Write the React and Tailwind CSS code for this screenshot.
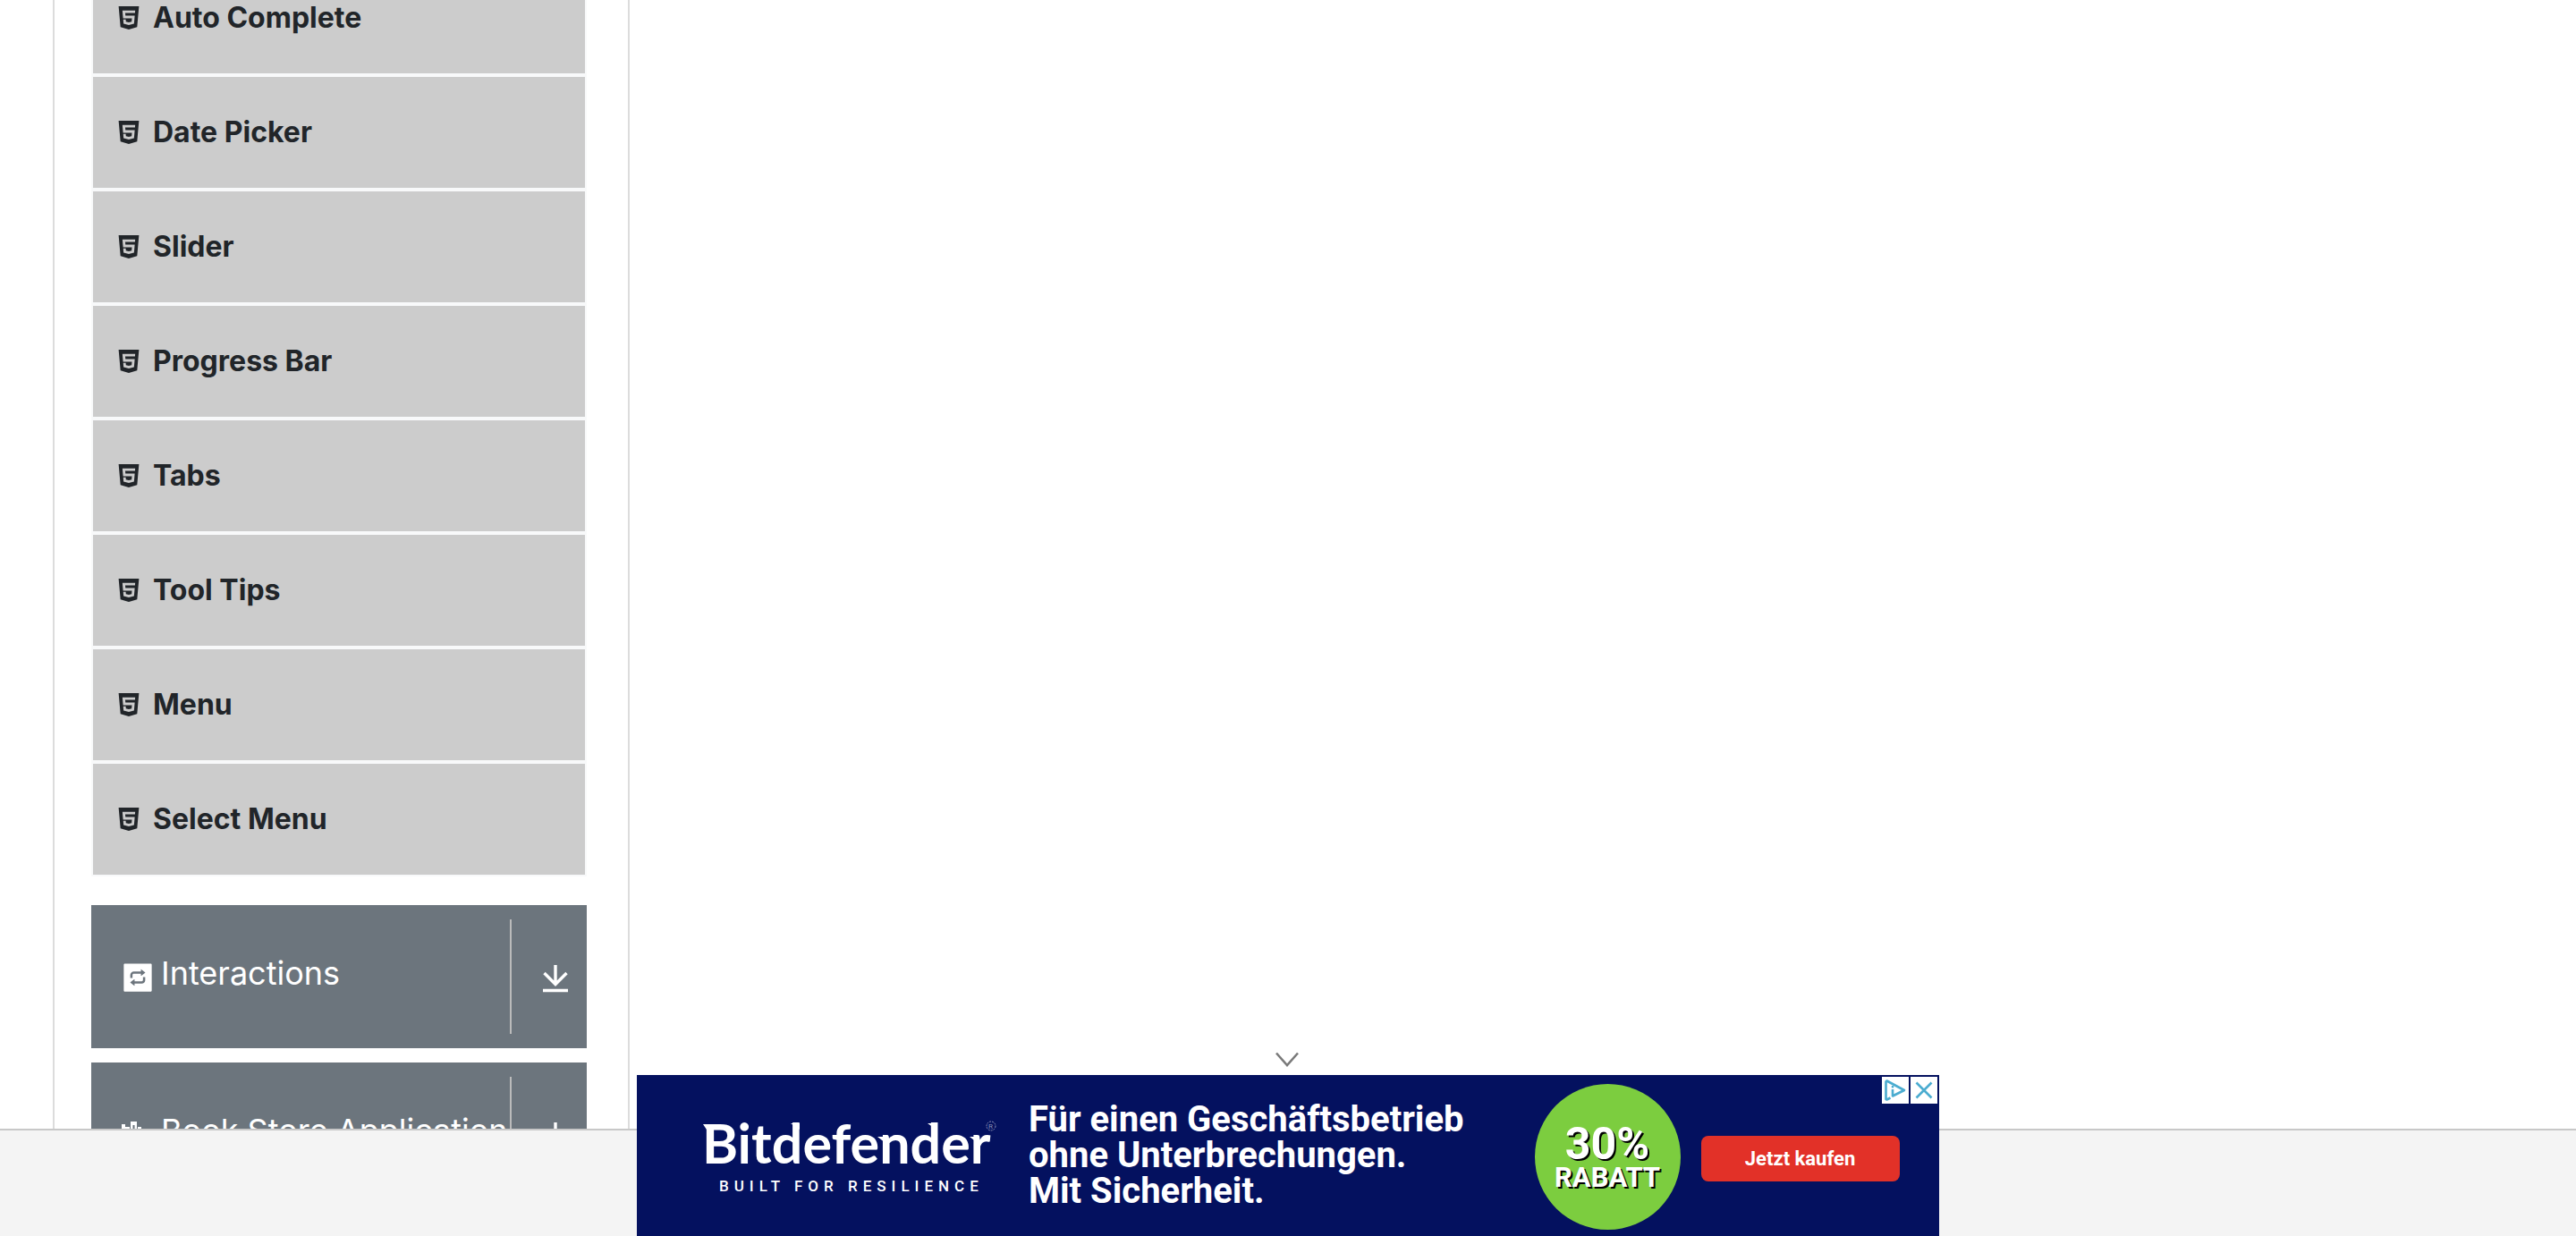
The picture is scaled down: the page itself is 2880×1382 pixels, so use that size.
import React from "react";
import { AiFillInteraction } from "react-icons/ai";
import { SiHtml5 } from "react-icons/si";

const ITEMS = [
  "Auto Complete",
  "Date Picker",
  "Slider",
  "Progress Bar",
  "Tabs",
  "Tool Tips",
  "Menu",
  "Select Menu",
];

function DownIcon() {
  return (
    <svg viewBox="0 0 30 32" className="h-8 w-[30px]" fill="none" stroke="currentColor" strokeWidth="3.4">
      <path d="M15 1v22M2.5 10 15 22.5 27.5 10M1 29.5h28" />
    </svg>
  );
}

function BooksIcon() {
  return (
    <svg viewBox="0 0 40 40" className="size-10" fill="currentColor">
      <path d="M2 8h4v28H2z M6 11h5v25H6z" />
      <path fillRule="evenodd" d="M12 5h7v31h-7z M14.5 9v23h2V9z" />
      <path d="M20 11h4v25h-4z M26 14h4l6 21-4 1z" />
    </svg>
  );
}

function GroupHeader({ icon, label }) {
  return (
    <button type="button" className="flex h-40 w-full shrink-0 items-stretch bg-[#6c757d] py-4 text-left text-white">
      <span className="flex min-w-0 flex-1 items-center gap-1.5 whitespace-nowrap pl-8">
        <span className="mt-0.5 flex shrink-0">{icon}</span>
        <span className="pb-2 text-[36px] leading-[60px]">{label}</span>
      </span>
      <span className="flex w-[86px] shrink-0 items-center justify-center border-l-2 border-[#bbb] pl-3.5 pt-1">
        <DownIcon />
      </span>
    </button>
  );
}

function Sidebar() {
  return (
    <aside className="flex w-[645px] shrink-0 flex-col gap-4 border-x-2 border-[#dcdcdc] pl-[41px] pr-[46px]">
      <ul className="-mt-11 mb-4 bg-[#f8f9fa]">
        {ITEMS.map((label) => (
          <li key={label} className="border-2 border-[#f8f9fa] bg-[#ccc]">
            <a href="#" className="flex h-[124px] items-center gap-3.5 pl-[27px] text-[32px] font-bold">
              <SiHtml5 className="size-[26px]" />
              {label}
            </a>
          </li>
        ))}
      </ul>
      <GroupHeader icon={<AiFillInteraction className="size-10" />} label="Interactions" />
      <GroupHeader icon={<BooksIcon />} label="Book Store Application" />
    </aside>
  );
}

function Logo() {
  return (
    <svg
      viewBox="0 0 340 100"
      className="h-[100px] w-[340px] shrink-0"
      fill="#fff"
      role="img"
      aria-label="Bitdefender, built for resilience"
    >
      <text x="5" y="59" className="font-[Lato] text-[61px] font-bold">Bitdefender</text>
      <path d="M6 15h16l-10 9z M104 14h10v7z M257 14h10v7z M201 29h9v7z M304 29h9v7z" />
      <circle cx="328" cy="17" r="5" fill="none" stroke="#8a90b5" strokeWidth="1" strokeDasharray="2 1" />
      <text x="325" y="20" fill="#8a90b5" className="font-[Roboto] text-[8px]">R</text>
      <text x="24" y="90" className="font-[Roboto] text-[17px] font-medium tracking-[6px]">BUILT FOR RESILIENCE</text>
    </svg>
  );
}

function AdChoices() {
  return (
    <div className="absolute right-0.5 top-0.5 flex gap-0.5 text-[#4bacd0]">
      <button type="button" aria-label="AdChoices" className="flex size-[30px] items-center justify-center bg-white">
        <svg viewBox="0 0 30 30" className="size-[30px]" fill="none" stroke="currentColor" strokeWidth="2.6" strokeLinejoin="round">
          <path d="M9.5 23.5 5.5 25.5 4.5 25V5.5L5.5 4.5 25 15 12 21.5V14" />
          <path d="M12 10v2.4" strokeWidth="2.4" />
        </svg>
      </button>
      <button type="button" aria-label="Anzeige schließen" className="flex size-[30px] items-center justify-center bg-white">
        <svg viewBox="0 0 30 30" className="size-[30px]" fill="none" stroke="currentColor" strokeWidth="2.6">
          <path d="M6.5 6.5 23.5 23.5M23.5 6.5 6.5 23.5" />
        </svg>
      </button>
    </div>
  );
}

function Ad() {
  return (
    <section
      aria-label="Anzeige"
      className="fixed bottom-0 left-1/2 flex h-[180px] w-[1456px] -translate-x-1/2 items-center bg-[#04115f] pl-[68px] font-[Roboto,sans-serif] text-white"
    >
      <button
        type="button"
        aria-label="Anzeige ausblenden"
        className="absolute -top-[26px] left-1/2 -ml-3.5 text-[#7a7a7a]"
      >
        <svg viewBox="0 0 26 18" className="h-[18px] w-[26px]" fill="none" stroke="currentColor" strokeWidth="2.6">
          <path d="M1 1.5 13 15 25 1.5" />
        </svg>
      </button>
      <Logo />
      <p className="pl-[30px] text-[40px] font-bold leading-10">
        Für einen Geschäftsbetrieb
        <br />
        ohne Unterbrechungen.
        <br />
        Mit Sicherheit.
      </p>
      <div className="ml-[79px] mt-0.5 flex size-[163px] shrink-0 flex-col items-center justify-center rounded-full bg-[#7ccd3f] pt-2 font-bold">
        <span className="text-[50px] leading-10 [text-shadow:2px_2px_0_#000]">30%</span>
        <span className="text-[31px] leading-9 [text-shadow:2px_2px_0_#000]">RABATT</span>
      </div>
      <button type="button" className="ml-[23px] mt-1.5 h-[51px] w-[222px] shrink-0 rounded-lg bg-[#e23128] text-[22px] font-bold">
        Jetzt kaufen
      </button>
      <AdChoices />
    </section>
  );
}

export default function App() {
  return (
    <div className="flex h-screen flex-col overflow-hidden bg-white font-[Inter,sans-serif] text-[#212529]">
      <main className="flex min-h-0 flex-1 overflow-hidden pl-[59px]">
        <Sidebar />
      </main>
      <footer className="h-[120px] shrink-0 border-t-2 border-[#c8c8c8] bg-[#f4f4f4]" />
      <Ad />
    </div>
  );
}
